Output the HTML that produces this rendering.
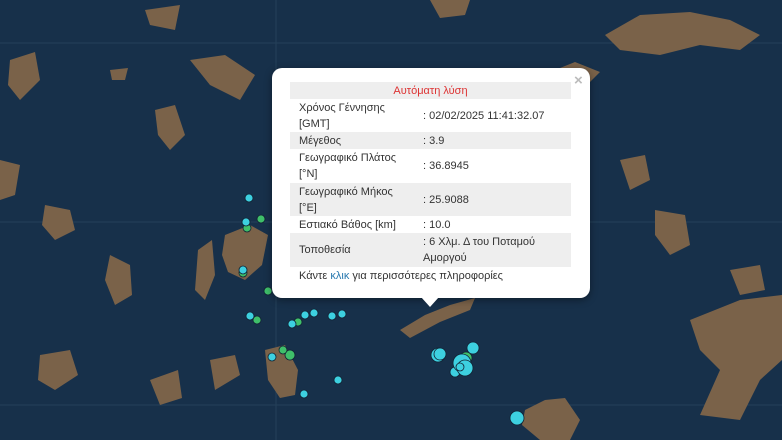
<!DOCTYPE html>
<html><head><meta charset="utf-8"><style>
html,body{margin:0;padding:0;width:782px;height:440px;overflow:hidden;background:#18324a;font-family:"Liberation Sans",sans-serif}
#map{position:absolute;left:0;top:0}
.pop{position:absolute;left:272px;top:68px;width:318px;height:230px;background:#fff;border-radius:10px;box-shadow:0 2px 8px rgba(0,0,0,.4)}
.tail{position:absolute;left:421px;top:297px;width:0;height:0;border-left:9px solid transparent;border-right:9px solid transparent;border-top:10px solid #fff}
.x{position:absolute;left:574px;top:72px;color:#bbb;font-size:15px;font-weight:bold}
table{position:absolute;left:290px;top:82px;width:281px;border-collapse:collapse;font-size:11px;color:#333;line-height:16px;table-layout:fixed}
td{padding:0 0 0 9px;vertical-align:middle}
tr.g{background:#eee}
.t{color:#d33;text-align:center;height:17px;padding:0}
.l{position:absolute;left:299px;top:270px;font-size:11px;color:#333}
.l span{color:#2a7ab0}
</style></head><body>
<svg id="map" width="782" height="440" viewBox="0 0 782 440">
<rect width="782" height="440" fill="#17304a"/>
<g stroke="#2d4b63" stroke-width="1" opacity=".6"><line x1="0" y1="43" x2="782" y2="43"/><line x1="0" y1="222" x2="782" y2="222"/><line x1="0" y1="405" x2="782" y2="405"/><line x1="276" y1="0" x2="276" y2="440"/></g>
<g fill="#7a6249">
<path d="M605 35 L640 15 L690 12 L730 20 L760 35 L740 50 L700 45 L660 55 L620 50 Z"/>
<path d="M555 70 L575 62 L600 72 L590 82 L565 80 Z"/>
<path d="M690 320 L740 300 L782 295 L782 360 L760 380 L740 420 L700 415 L720 370 L700 350 Z"/>
<path d="M225 235 L250 225 L268 235 L262 265 L245 280 L228 272 L222 255 Z"/>
<path d="M198 250 L212 240 L215 275 L205 300 L195 290 Z"/>
<path d="M265 350 L285 345 L298 370 L295 395 L280 398 L268 380 Z"/>
<path d="M400 330 L425 315 L450 305 L475 298 L470 310 L440 322 L410 338 Z"/>
<path d="M525 410 L545 400 L565 398 L580 420 L570 440 L540 440 L522 425 Z"/>
<path d="M110 255 L130 265 L132 295 L115 305 L105 280 Z"/>
<path d="M40 355 L70 350 L78 375 L55 390 L38 380 Z"/>
<path d="M210 360 L235 355 L240 375 L215 390 Z"/>
<path d="M150 380 L178 370 L182 398 L160 405 Z"/>
<path d="M10 60 L35 52 L40 80 L20 100 L8 85 Z"/>
<path d="M190 60 L225 55 L255 75 L240 100 L210 85 Z"/>
<path d="M155 110 L175 105 L185 135 L170 150 L158 135 Z"/>
<path d="M45 205 L70 210 L75 230 L55 240 L42 225 Z"/>
<path d="M145 10 L180 5 L175 30 L150 25 Z"/>
<path d="M655 210 L685 215 L690 245 L670 255 L655 235 Z"/>
<path d="M620 160 L645 155 L650 180 L630 190 Z"/>
<path d="M0 160 L20 165 L15 195 L0 200 Z"/>
<path d="M110 70 L128 68 L125 80 L112 80 Z"/>
<path d="M430 0 L470 0 L465 15 L440 18 Z"/>
<path d="M730 270 L760 265 L765 290 L740 295 Z"/>
</g>
<g stroke="#123" stroke-width=".8">
<g fill="#3fbf6a"><circle cx="261" cy="219" r="4"/><circle cx="247" cy="228" r="4"/><circle cx="243" cy="273" r="4"/><circle cx="268" cy="291" r="4"/><circle cx="257" cy="320" r="4"/><circle cx="290" cy="355" r="5"/><circle cx="283" cy="350" r="4"/><circle cx="466" cy="358" r="6"/><circle cx="298" cy="322" r="4"/></g>
<g fill="#3dd0e0"><circle cx="249" cy="198" r="4"/><circle cx="246" cy="222" r="4"/><circle cx="243" cy="270" r="4"/><circle cx="250" cy="316" r="4"/><circle cx="292" cy="324" r="4"/><circle cx="305" cy="315" r="4"/><circle cx="314" cy="313" r="4"/><circle cx="332" cy="316" r="4"/><circle cx="272" cy="357" r="4"/><circle cx="338" cy="380" r="4"/><circle cx="304" cy="394" r="4"/><circle cx="438" cy="355" r="7"/><circle cx="440" cy="354" r="6"/><circle cx="473" cy="348" r="6"/><circle cx="455" cy="372" r="5"/><circle cx="462" cy="363" r="9"/><circle cx="465" cy="368" r="8"/><circle cx="460" cy="367" r="4"/><circle cx="517" cy="418" r="7"/><circle cx="342" cy="314" r="4"/></g>
</g>
</svg>
<div class="pop"></div><div class="tail"></div><div class="x">×</div>
<table>
<colgroup><col style="width:124px"><col></colgroup>
<tr class="g"><td colspan="2" class="t">Αυτόματη λύση</td></tr>
<tr style="height:33px"><td>Χρόνος Γέννησης<br>[GMT]</td><td>: 02/02/2025 11:41:32.07</td></tr>
<tr class="g" style="height:17px"><td>Μέγεθος</td><td>: 3.9</td></tr>
<tr style="height:34px"><td>Γεωγραφικό Πλάτος<br>[°N]</td><td>: 36.8945</td></tr>
<tr class="g" style="height:33px"><td>Γεωγραφικό Μήκος<br>[°E]</td><td>: 25.9088</td></tr>
<tr style="height:17px"><td>Εστιακό Βάθος [km]</td><td>: 10.0</td></tr>
<tr class="g" style="height:34px"><td>Τοποθεσία</td><td>: 6 Χλμ. Δ του Ποταμού<br>Αμοργού</td></tr>
</table>
<div class="l">Κάντε <span>κλικ</span> για περισσότερες πληροφορίες</div>
</body></html>
